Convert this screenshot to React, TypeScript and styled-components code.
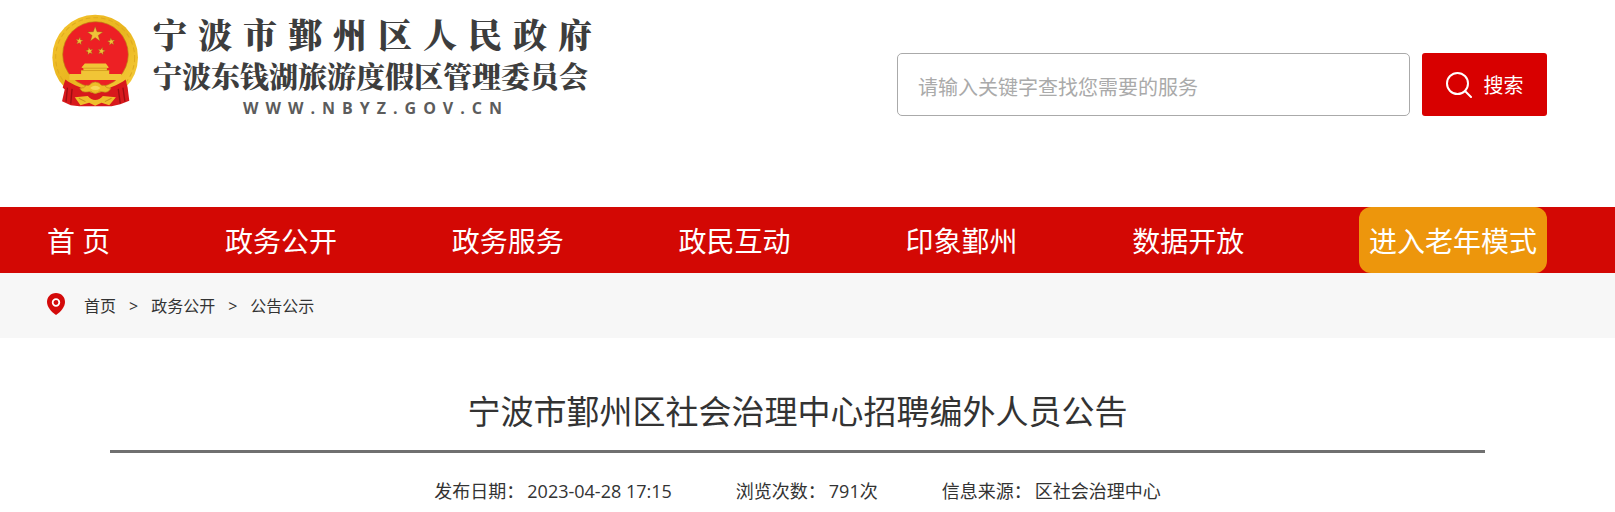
import React from "react";
import styled, { createGlobalStyle } from "styled-components";

const GlobalStyle = createGlobalStyle`
  * { box-sizing: border-box; }
  body {
    margin: 0;
    background: #fff;
    color: #333;
    font-family: "Open Sans", "Noto Sans CJK SC", sans-serif;
    font-size: 16px;
  }
  a { color: inherit; text-decoration: none; }
  button, input { font-family: inherit; }
`;

const Container = styled.div`
  padding: 0 68px 0 47px;
`;

const HeaderRow = styled(Container)`
  display: flex;
  justify-content: space-between;
  align-items: flex-start;
  gap: 40px;
  padding-bottom: 89px;
`;

const Brand = styled.a`
  display: flex;
  flex: none;
  gap: 14px;
  padding: 14px 0 0 5px;
`;

const BrandText = styled.span`
  display: flex;
  flex-direction: column;
  color: #3d3d3d;
  font-weight: 900;
  white-space: nowrap;
`;

const BrandName = styled.span`
  font-size: 34px;
  line-height: 40px;
  letter-spacing: 11px;
  font-family: "Noto Serif CJK SC", "Noto Sans CJK SC", serif;
`;

const BrandSubname = styled.span`
  font-size: 29px;
  line-height: 44px;
  font-family: "Noto Serif CJK SC", "Noto Sans CJK SC", serif;
`;

const BrandUrl = styled.span`
  padding-left: 90px;
  color: #5c5c5c;
  font-size: 16px;
  font-weight: 700;
  line-height: 20px;
  letter-spacing: 7px;
`;

const SearchForm = styled.form`
  display: flex;
  flex: 0 1 650px;
  gap: 12px;
  padding-top: 53px;
`;

const SearchInput = styled.input`
  flex: 1;
  min-width: 0;
  height: 63px;
  padding: 6px 20px 0;
  border: 1px solid #aaa;
  border-radius: 5px;
  background: #fff;
  color: #333;
  font-size: 20px;
  &::placeholder { color: #aaa; opacity: 1; }
`;

const SearchButton = styled.button`
  display: flex;
  align-items: center;
  justify-content: center;
  gap: 12px;
  width: 125px;
  height: 63px;
  padding: 0;
  border: 0;
  border-radius: 3px;
  background: #d80000;
  color: #fff;
  font-size: 20px;
  cursor: pointer;
`;

const NavBar = styled.nav`
  background: #d30804;
`;

const NavList = styled(Container)`
  display: flex;
  justify-content: space-between;
`;

const NavLink = styled.a<{ $accent?: boolean }>`
  padding: ${(p) => (p.$accent ? "2px 10px 0" : "2px 0 0")};
  border-radius: ${(p) => (p.$accent ? "12px" : "0")};
  background: ${(p) => (p.$accent ? "#ed960c" : "transparent")};
  color: #fff;
  font-size: 28px;
  line-height: 64px;
  white-space: nowrap;
`;

const CrumbBar = styled.div`
  background: #f7f7f7;
`;

const Crumbs = styled(Container)`
  display: flex;
  align-items: center;
  height: 65px;
`;

const CrumbPin = styled.svg`
  flex: none;
  margin-bottom: 4px;
`;

const CrumbTrail = styled.span`
  display: flex;
  gap: 13px;
  padding-left: 19px;
  line-height: 24px;
`;

const Article = styled.main`
  margin: 0 130px 0 110px;
  padding-top: 49px;
`;

const Title = styled.h1`
  margin: 0;
  padding-bottom: 13px;
  border-bottom: 3px solid #707070;
  font-size: 33px;
  font-weight: 400;
  line-height: 50px;
  text-align: center;
`;

const Meta = styled.div`
  display: flex;
  justify-content: center;
  gap: 64px;
  padding-top: 24px;
  font-size: 18px;
  line-height: 28px;
  white-space: nowrap;
`;

const MetaItem = styled.span`
  display: flex;
  gap: 3px;
`;

const star = (cx: number, cy: number, r: number, turn = 0) =>
  Array.from({ length: 10 }, (_, i) => {
    const a = ((i * 36 - 90 + turn) * Math.PI) / 180;
    const d = i % 2 ? r * 0.4 : r;
    return `${(cx + d * Math.cos(a)).toFixed(1)},${(cy + d * Math.sin(a)).toFixed(1)}`;
  }).join(" ");

const Emblem = () => (
  <svg width="87" height="93" viewBox="36 42 260 278" aria-hidden="true">
    <defs>
      <linearGradient id="gold" x1="0" y1="0" x2="1" y2="1">
        <stop offset="0" stopColor="#f5c52e" />
        <stop offset="0.5" stopColor="#e9b51f" />
        <stop offset="1" stopColor="#f7cf3d" />
      </linearGradient>
    </defs>
    <ellipse cx="165" cy="172" rx="128" ry="128" fill="url(#gold)" />
    <ellipse cx="165" cy="172" rx="118" ry="119" fill="none" stroke="#deaa20" strokeWidth="3" strokeDasharray="14 9" />
    <ellipse cx="166" cy="163" rx="98" ry="98" fill="#ed2024" stroke="#bd8013" strokeWidth="2" />
    <g fill="#f0c238" stroke="#8d5b17" strokeWidth="1">
      <polygon points={star(165, 103, 24)} />
      <polygon points={star(118, 123, 12, 8)} />
      <polygon points={star(213, 125, 12, -8)} />
      <polygon points={star(148, 153, 12, -12)} />
      <polygon points={star(184, 153, 12, 12)} />
    </g>
    <path d="M134 190 H197 L206 202 L200 204 V210 H207 V221 H243 V239 H88 V221 H123 V210 H130 V204 L124 202Z" fill="#f1c536" />
    <path d="M130 204 H201 M123 211 H207" stroke="#c78e18" strokeWidth="2" />
    <path d="M76 238 Q90 250 118 260 L142 274 L165 280 L190 274 L214 260 Q242 250 256 238 L262 262 L267 301 L240 312 L214 318 H118 L92 315 L66 303 L74 268 L68 262Z" fill="#d8191c" />
    <path d="M82 262 L78 304 M96 266 L92 310 M248 262 L254 304 M234 266 L240 309" stroke="#9c0e12" strokeWidth="4" fill="none" />
    <path d="M119 264 Q132 265 139 255 Q148 258 153 249 Q165 241 178 249 Q183 258 192 255 Q199 265 212 264 Q204 279 190 275 L178 273 Q166 286 152 273 L141 275 Q126 278 119 264Z" fill="#efbd29" stroke="#bd8418" strokeWidth="2" />
    <path d="M150 263 Q165 250 181 263 Q166 276 150 263Z" fill="#f8d758" />
    <path d="M104 291 L143 287 Q153 299 165 299 Q178 299 188 287 L227 291 L207 315 L184 307 L165 316 L147 307 L121 315Z" fill="#efbf2b" />
    <path d="M116 294 L136 304 M214 294 L194 304" stroke="#c98c1a" strokeWidth="3" />
  </svg>
);

const SearchIcon = () => (
  <svg width="26" height="26" viewBox="0 0 26 26" fill="none" stroke="#fff" strokeWidth="2" aria-hidden="true">
    <circle cx="11.5" cy="11.5" r="10.5" />
    <path d="M19 19 L25 25" strokeLinecap="round" />
  </svg>
);

const PinIcon = () => (
  <CrumbPin width="18" height="22" viewBox="0 0 18 22" aria-hidden="true">
    <path d="M9 0 C3.5 0 0 4 0 9 C0 14 4.5 19 9 22 C13.5 19 18 14 18 9 C18 4 14.5 0 9 0Z" fill="#d40a0a" />
    <circle cx="9" cy="9.5" r="3.3" fill="none" stroke="#fff" strokeWidth="1.8" />
  </CrumbPin>
);

const navItems = ["首 页", "政务公开", "政务服务", "政民互动", "印象鄞州", "数据开放"];
const details = [
  ["发布日期：", "2023-04-28 17:15"],
  ["浏览次数：", "791次"],
  ["信息来源：", "区社会治理中心"],
];

export default function App() {
  return (
    <>
      <GlobalStyle />
      <header>
        <HeaderRow>
          <Brand href="#">
            <Emblem />
            <BrandText>
              <BrandName>宁波市鄞州区人民政府</BrandName>
              <BrandSubname>宁波东钱湖旅游度假区管理委员会</BrandSubname>
              <BrandUrl>WWW.NBYZ.GOV.CN</BrandUrl>
            </BrandText>
          </Brand>
          <SearchForm onSubmit={(e) => e.preventDefault()}>
            <SearchInput type="text" aria-label="搜索" placeholder="请输入关键字查找您需要的服务" />
            <SearchButton type="submit">
              <SearchIcon />
              搜索
            </SearchButton>
          </SearchForm>
        </HeaderRow>
        <NavBar>
          <NavList>
            {navItems.map((item) => (
              <NavLink href="#" key={item}>{item}</NavLink>
            ))}
            <NavLink href="#" $accent>进入老年模式</NavLink>
          </NavList>
        </NavBar>
      </header>
      <CrumbBar>
        <Crumbs>
          <PinIcon />
          <CrumbTrail>
            <a href="#">首页</a>
            <span>&gt;</span>
            <a href="#">政务公开</a>
            <span>&gt;</span>
            <a href="#">公告公示</a>
          </CrumbTrail>
        </Crumbs>
      </CrumbBar>
      <Article>
        <Title>宁波市鄞州区社会治理中心招聘编外人员公告</Title>
        <Meta>
          {details.map(([label, value]) => (
            <MetaItem key={label}>
              <span>{label}</span>
              <span>{value}</span>
            </MetaItem>
          ))}
        </Meta>
      </Article>
    </>
  );
}
